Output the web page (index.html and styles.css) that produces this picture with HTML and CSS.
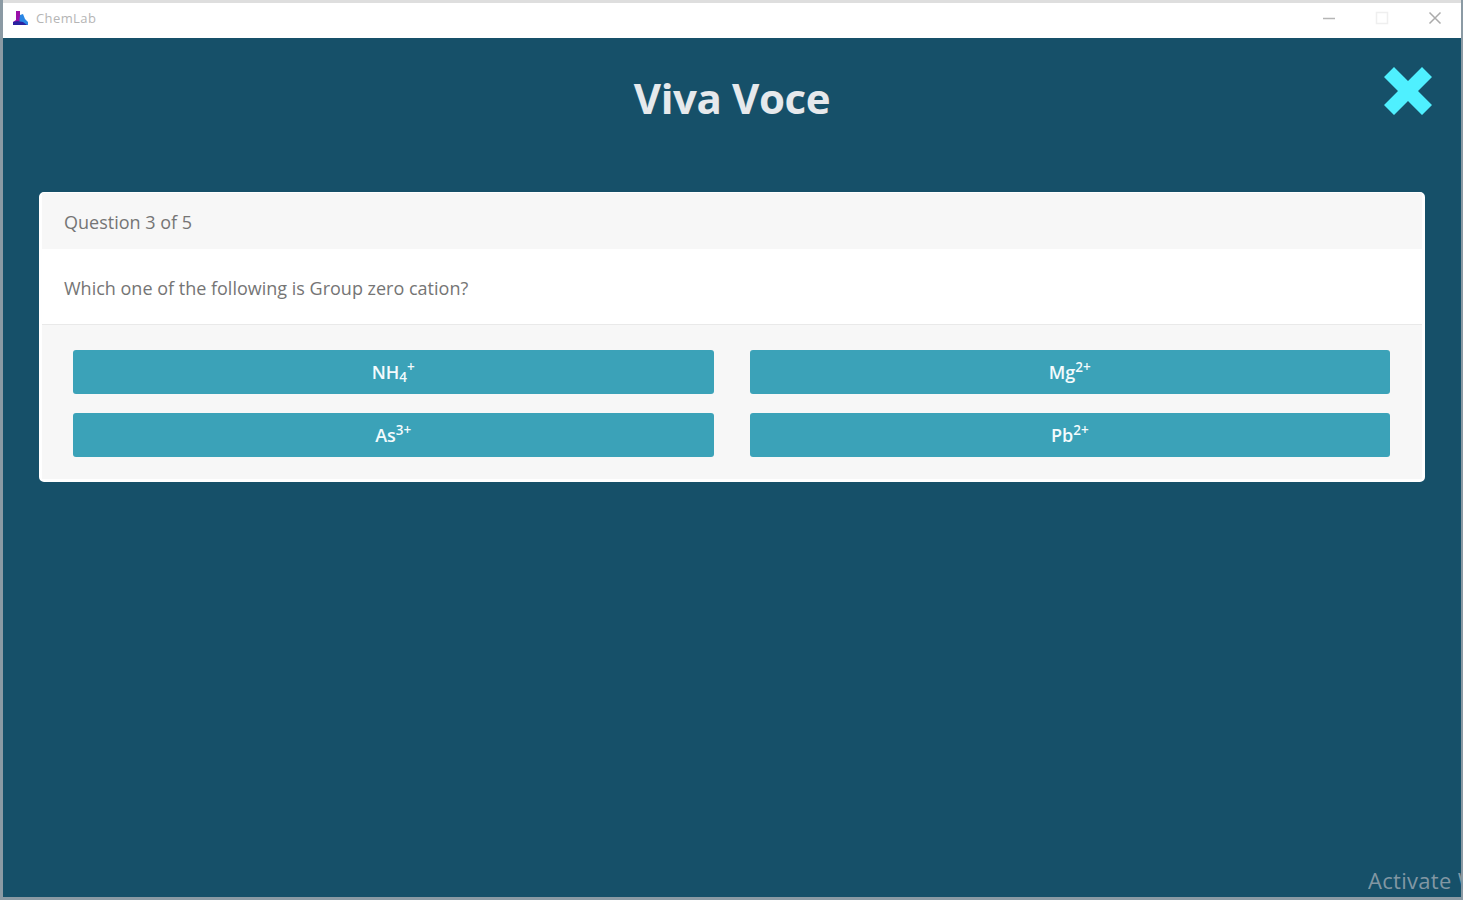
FILE: index.html
```html
<!DOCTYPE html>
<html lang="en">
<head>
    <meta charset="UTF-8">
    <meta name="viewport" content="width=device-width, initial-scale=1.0">
    <title>ChemLab</title>
    <link rel="stylesheet" href="styles.css">
</head>
<body>
    <div class="window">
        <!-- Title bar -->
        <div class="titlebar">
            <svg class="app-icon" width="17" height="16" viewBox="0 0 17 16">
                <path d="M4 1h4v9l2 5H1v-3l3-2z" fill="#9a10a8"/>
                <path d="M8 5l3-1 2 5 3 3v3H7z" fill="#2a86e4"/>
                <path d="M1 12l4-1 6 1 4 3H1z" fill="#2a22a0"/>
            </svg>
            <span class="app-name">ChemLab</span>
            <div class="controls">
                <svg width="14" height="14" viewBox="0 0 14 14"><path d="M1 7.500h12" stroke="#b5b5b5" stroke-width="1.5"/></svg>
                <svg width="14" height="14" viewBox="0 0 14 14"><rect x="1.5" y="1.5" width="11" height="11" fill="none" stroke="#efefef" stroke-width="1.5"/></svg>
                <svg width="14" height="14" viewBox="0 0 14 14"><path d="M1.500 1.500l11 11M12.500 1.500l-11 11" stroke="#ababab" stroke-width="1.5"/></svg>
            </div>
        </div>

        <div class="page">
            <div class="page-header">
                <h1>Viva Voce</h1>
                <button class="btn-close" aria-label="Close">
                    <svg width="50" height="50" viewBox="0 0 50 50"><path d="M11 1L25 15L39 1L49 11L35 25L49 39L39 49L25 35L11 49L1 39L15 25L1 11Z" fill="#4ff0ff"/></svg>
                </button>
            </div>

            <!-- Question card -->
            <div class="card">
                <div class="card-header"><span>Question 3 of 5</span></div>
                <div class="card-body"><span>Which one of the following is Group zero cation?</span></div>
                <div class="card-footer">
                    <button class="btn">NH<sub>4</sub><sup>+</sup></button>
                    <button class="btn">Mg<sup>2+</sup></button>
                    <button class="btn">As<sup>3+</sup></button>
                    <button class="btn">Pb<sup>2+</sup></button>
                </div>
            </div>
        </div>
    </div>
    <div class="watermark">Activate W</div>
</body>
</html>
```
FILE: styles.css
```css
* { box-sizing: border-box; }
body { margin: 0; height: 900px; padding: 3px 2px 3px 3px; overflow: hidden; background: #8b9aa4; font-family: "Open Sans", "Noto Sans", sans-serif; }
.window { height: 894px; display: flex; flex-direction: column; background: #165069; box-shadow: 0 -3px 0 #dedede; }
.titlebar { height: 35px; display: flex; align-items: center; padding: 0 19px 5px 9px; background: #fff; }
.app-name { margin-left: 7px; font-size: 13px; letter-spacing: 0.4px; color: #b5b5b5; }
.controls { margin-left: auto; display: flex; gap: 39px; }
.page { flex: 1; padding: 0 36px; }
.page-header { height: 154px; position: relative; text-align: center; }
h1 { margin: 0; padding-top: 33px; font-size: 42px; line-height: 54px; font-weight: 700; letter-spacing: -0.4px; color: #e6e9ec; }
.btn-close { position: absolute; top: 28px; right: -8px; width: 50px; height: 50px; padding: 0; border: none; background: none; cursor: pointer; }
.card { height: 290px; display: flex; flex-direction: column; border: 3px solid #fff; border-top-width: 1px; border-radius: 5px; background: #fff; font-size: 18px; color: #757575; }
.card-header { height: 56px; display: flex; align-items: center; padding: 1px 22px 0; background: #f7f7f7; }
.card-body { height: 75px; display: flex; align-items: center; padding: 3px 22px 0; }
.card-footer { flex: 1; display: grid; grid-template-columns: 1fr 1fr; grid-auto-rows: 44px; gap: 19px 36px; padding: 25px 32px 0 31px; border-top: 1px solid #e9e9e9; background: #f7f7f7; }
.btn { padding: 0; border: none; border-radius: 3px; background: #3ba2b8; color: #f3fbfd; font-family: inherit; font-size: 18px; font-weight: 600; cursor: pointer; }
.btn sub, .btn sup { font-size: 75%; line-height: 0; }
.btn sub { vertical-align: -3px; }
.watermark { position: absolute; left: 1368px; top: 865px; width: 95px; overflow: hidden; white-space: nowrap; font-size: 22px; line-height: 30px; letter-spacing: 0.3px; color: #8297a3; }
```
